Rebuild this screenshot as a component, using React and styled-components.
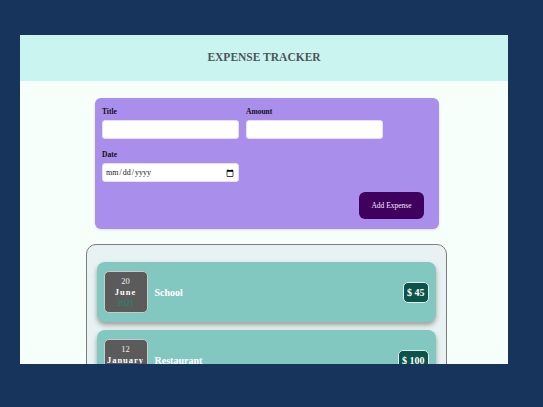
import React, { useState } from 'react';
import styled, { createGlobalStyle } from 'styled-components';

const Global = createGlobalStyle`
  body {
    margin: 0;
    background: #17355c;
    font-family: "Liberation Serif", "Times New Roman", serif;
  }
`;

const Frame = styled.div`
  margin: 35px 0 0 20px;
  width: 488px;
  height: 329px;
  overflow: hidden;
  background: #f6fff9;
`;

const Header = styled.header`
  height: 46px;
  background: #caf4f0;
  display: flex;
  align-items: center;
  justify-content: center;
  padding-bottom: 3px;
  box-sizing: border-box;
`;

const Title = styled.h1`
  margin: 0;
  font-size: 11.5px;
  font-weight: bold;
  color: #4b5658;
`;

const Body = styled.main`
  display: flex;
  flex-direction: column;
  align-items: center;
  padding: 17px 0 0 6px;
`;

const FormCard = styled.form`
  width: 344px;
  box-sizing: border-box;
  background: #a98eeb;
  border-radius: 6px;
  padding: 9px 7px 10px 7px;
  box-shadow: 0 1px 3px rgba(0, 0, 0, 0.12);
`;

const Controls = styled.div`
  display: flex;
  flex-wrap: wrap;
  gap: 11px 7px;
`;

const Control = styled.div`
  width: 137px;
  display: flex;
  flex-direction: column;
  gap: 4px;
`;

const Label = styled.label`
  font-size: 7.5px;
  font-weight: bold;
  color: #111;
`;

const Input = styled.input`
  box-sizing: border-box;
  width: 137px;
  height: 19px;
  border: 1px solid #e4e0f4;
  border-radius: 3px;
  background: #fff;
  font-family: "Liberation Serif", serif;
  font-size: 8px;
  padding: 0 2px;
  color: #222;
`;

const Actions = styled.div`
  display: flex;
  justify-content: flex-end;
  margin-top: 10px;
  padding-right: 8px;
`;

const AddButton = styled.button`
  width: 65px;
  height: 27px;
  border: none;
  border-radius: 6px;
  background: #40005d;
  color: #f3eaff;
  font-family: "Liberation Serif", serif;
  font-size: 7.5px;
  cursor: pointer;
`;

const ListCard = styled.section`
  margin-top: 15px;
  width: 361px;
  box-sizing: border-box;
  margin-left: -2px;
  background: #e9f2f2;
  border: 1px solid #7d7d7d;
  border-radius: 10px;
  padding: 17px 10px 20px 10px;
  display: flex;
  flex-direction: column;
  gap: 8px;
`;

const Item = styled.div`
  height: 60px;
  background: #82c8c0;
  border-radius: 8px;
  box-shadow: 0 3px 5px rgba(0, 0, 0, 0.35);
  display: flex;
  align-items: center;
  padding: 0 7px;
  gap: 7px;
`;

const DateBox = styled.div`
  width: 44px;
  height: 42px;
  box-sizing: border-box;
  background: #5b5b5b;
  border: 1px solid #c9c9c9;
  border-radius: 5px;
  display: flex;
  flex-direction: column;
  align-items: center;
  justify-content: center;
  font-size: 8.5px;
  line-height: 11px;
`;

const Day = styled.span`
  color: #eee;
`;

const Month = styled.span`
  color: #fff;
  font-weight: bold;
  letter-spacing: 1px;
`;

const Year = styled.span`
  color: #1d8a72;
`;

const ItemTitle = styled.span`
  flex: 1;
  color: #fff;
  font-weight: bold;
  font-size: 10px;
`;

const Price = styled.span`
  background: #0c5349;
  border: 1px solid #dfeeee;
  border-radius: 5px;
  color: #fff;
  font-weight: bold;
  font-size: 10px;
  padding: 4px 3px;
`;

const expenses = [
  { id: 1, title: 'School', amount: 45, day: '20', month: 'June', year: '2021' },
  { id: 2, title: 'Restaurant', amount: 100, day: '12', month: 'January', year: '2021' },
];

const App = () => {
  const [title, setTitle] = useState('');
  const [amount, setAmount] = useState('');
  const [date, setDate] = useState('');

  return (
    <>
      <Global />
      <Frame>
        <Header>
          <Title>EXPENSE TRACKER</Title>
        </Header>
        <Body>
          <FormCard onSubmit={(e) => e.preventDefault()}>
            <Controls>
              <Control>
                <Label>Title</Label>
                <Input value={title} onChange={(e) => setTitle(e.target.value)} />
              </Control>
              <Control>
                <Label>Amount</Label>
                <Input type="number" value={amount} onChange={(e) => setAmount(e.target.value)} />
              </Control>
              <Control>
                <Label>Date</Label>
                <Input type="date" value={date} onChange={(e) => setDate(e.target.value)} />
              </Control>
            </Controls>
            <Actions>
              <AddButton type="submit">Add Expense</AddButton>
            </Actions>
          </FormCard>
          <ListCard>
            {expenses.map((item) => (
              <Item key={item.id}>
                <DateBox>
                  <Day>{item.day}</Day>
                  <Month>{item.month}</Month>
                  <Year>{item.year}</Year>
                </DateBox>
                <ItemTitle>{item.title}</ItemTitle>
                <Price>$ {item.amount}</Price>
              </Item>
            ))}
          </ListCard>
        </Body>
      </Frame>
    </>
  );
};

export default App;
